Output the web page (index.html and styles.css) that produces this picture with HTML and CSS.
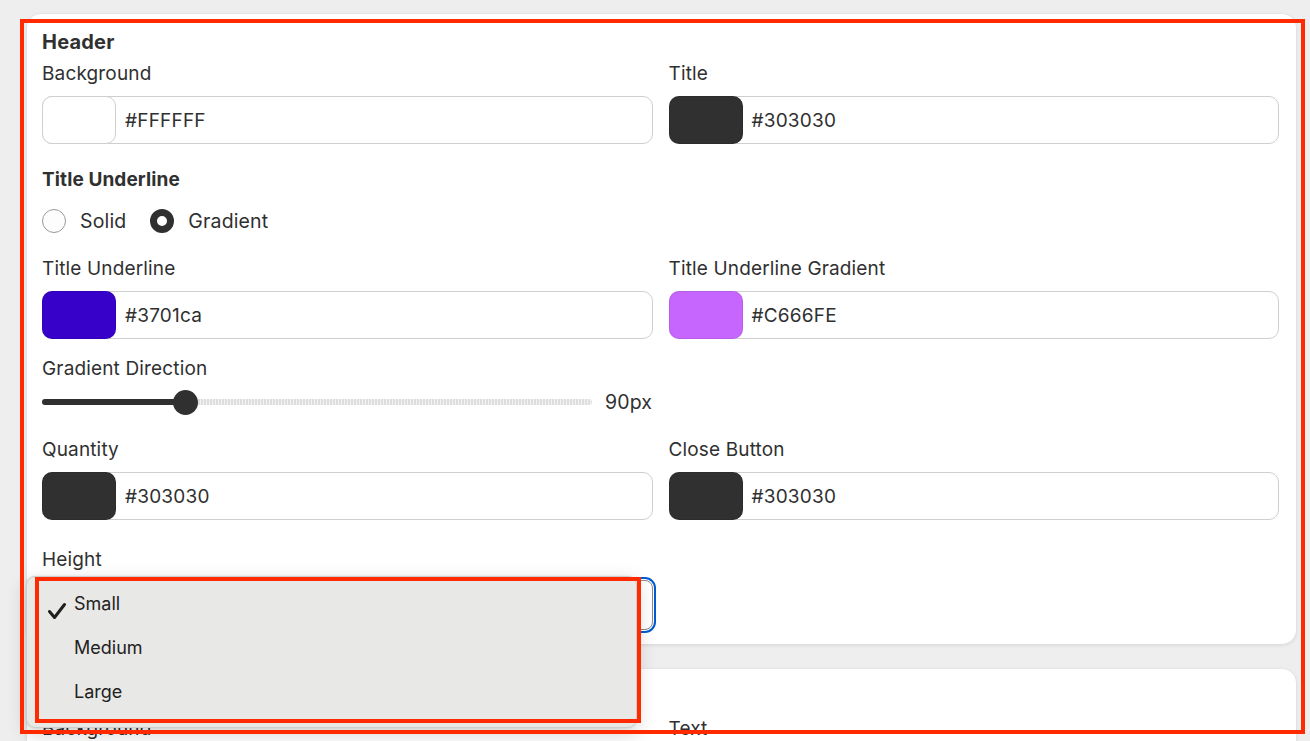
FILE: index.html
```html
<!DOCTYPE html>
<html lang="en">
<head>
<meta charset="utf-8">
<title>Header settings</title>
<link rel="stylesheet" href="styles.css">
</head>
<body>
<div class="page">
  <section class="card">
    <h2 class="card-title">Header</h2>
    <div class="grid">
      <div class="field">
        <label class="label">Background</label>
        <div class="color-input">
          <span class="swatch swatch-white"></span>
          <span class="hex">#FFFFFF</span>
        </div>
      </div>
      <div class="field">
        <label class="label">Title</label>
        <div class="color-input">
          <span class="swatch" style="background:#303030"></span>
          <span class="hex">#303030</span>
        </div>
      </div>
    </div>

    <h3 class="section-title">Title Underline</h3>
    <div class="radios">
      <label class="radio"><span class="radio-dot"></span><span>Solid</span></label>
      <label class="radio"><span class="radio-dot checked"></span><span>Gradient</span></label>
    </div>

    <div class="grid grid-spaced">
      <div class="field">
        <label class="label">Title Underline</label>
        <div class="color-input">
          <span class="swatch" style="background:#3701ca"></span>
          <span class="hex">#3701ca</span>
        </div>
      </div>
      <div class="field">
        <label class="label">Title Underline Gradient</label>
        <div class="color-input">
          <span class="swatch" style="background:#C666FE"></span>
          <span class="hex">#C666FE</span>
        </div>
      </div>
    </div>

    <div class="field field-slider">
      <label class="label">Gradient Direction</label>
      <div class="slider-row">
        <div class="slider">
          <div class="slider-fill" style="width:26.1%"></div>
          <div class="slider-thumb" style="left:26.1%"></div>
        </div>
        <span class="slider-value">90px</span>
      </div>
    </div>

    <div class="grid grid-spaced">
      <div class="field">
        <label class="label">Quantity</label>
        <div class="color-input">
          <span class="swatch" style="background:#303030"></span>
          <span class="hex">#303030</span>
        </div>
      </div>
      <div class="field">
        <label class="label">Close Button</label>
        <div class="color-input">
          <span class="swatch" style="background:#303030"></span>
          <span class="hex">#303030</span>
        </div>
      </div>
    </div>

    <div class="grid grid-height">
      <div class="field">
        <label class="label">Height</label>
        <div class="select-wrap">
          <div class="select">Small</div>
          <ul class="menu">
            <li class="menu-item selected">
              <svg class="check" width="20" height="18" viewBox="0 0 20 18"><path d="M2.5 9.5 L7.5 15.5 L17.5 2.5" fill="none" stroke="#1f1f1f" stroke-width="3" stroke-linecap="round" stroke-linejoin="round"/></svg>
              <span>Small</span>
            </li>
            <li class="menu-item"><span>Medium</span></li>
            <li class="menu-item"><span>Large</span></li>
          </ul>
        </div>
      </div>
      <div></div>
    </div>
  </section>

  <section class="card card-second">
    <h2 class="card-title">Footer</h2>
    <div class="grid">
      <div class="field">
        <label class="label">Background</label>
        <div class="color-input">
          <span class="swatch swatch-white"></span>
          <span class="hex">#FFFFFF</span>
        </div>
      </div>
      <div class="field">
        <label class="label">Text</label>
        <div class="color-input">
          <span class="swatch" style="background:#303030"></span>
          <span class="hex">#303030</span>
        </div>
      </div>
    </div>
  </section>
</div>
<div class="annot annot-outer"></div>
<div class="annot annot-menu"></div>
</body>
</html>
```

FILE: styles.css
```css
* { box-sizing: border-box; }

html, body {
  margin: 0;
  padding: 0;
  height: 741px;
  overflow: hidden;
}

body {
  background: #eeeeee;
  font-family: Inter, "Noto Sans", sans-serif;
  color: #303030;
  position: relative;
}

.page {
  padding: 14px 14px 0 27px;
  display: flex;
  flex-direction: column;
  gap: 25px;
}

.card {
  background: #ffffff;
  border-radius: 14px;
  padding: 16px 17px 14px 15px;
  box-shadow: 0 1px 4px rgba(0, 0, 0, 0.10), 0 0 1px rgba(0, 0, 0, 0.08);
}

.card-title {
  margin: 0;
  font-size: 20px;
  line-height: 24px;
  font-weight: 650;
  letter-spacing: 0.2px;
}

.section-title {
  margin: 24px 0 0;
  font-size: 19px;
  line-height: 24px;
  font-weight: 650;
  letter-spacing: 0.1px;
}

.grid {
  display: grid;
  grid-template-columns: 1fr 1fr;
  column-gap: 16px;
  margin-top: 8px;
}

.grid-spaced { margin-top: 24px; }
.grid-height { margin-top: 28px; }

.field {
  display: flex;
  flex-direction: column;
}

.label {
  font-size: 19px;
  line-height: 24px;
  letter-spacing: 0.15px;
}

.color-input {
  margin-top: 10px;
  height: 48px;
  border: 1px solid #cfcfcf;
  border-radius: 10px;
  display: flex;
  align-items: center;
}

.swatch {
  width: 74px;
  height: 48px;
  margin: -1px 0 -1px -1px;
  border-radius: 10px;
  border: 1px solid rgba(0, 0, 0, 0.08);
  flex: none;
}

.swatch-white {
  background: #ffffff;
  border-color: #cfcfcf;
}

.hex {
  margin-left: 9px;
  font-size: 19px;
  letter-spacing: 0.2px;
}

.radios {
  margin-top: 17px;
  display: flex;
  gap: 24px;
  height: 24px;
}

.radio {
  display: flex;
  align-items: center;
  gap: 14px;
  font-size: 19.5px;
  letter-spacing: 0.15px;
}

.radio-dot {
  width: 24px;
  height: 24px;
  border-radius: 50%;
  border: 1px solid #9a9a9a;
  background: #fdfdfd;
  flex: none;
}

.radio-dot.checked {
  border: 7px solid #303030;
  background: #ffffff;
}

.field-slider { margin-top: 18px; }

.slider-row {
  margin-top: 9px;
  height: 24px;
  display: flex;
  align-items: center;
  width: 610px;
}

.slider {
  position: relative;
  flex: 1;
  height: 6px;
  border-radius: 3px;
  background: repeating-linear-gradient(90deg, #dedede 0 2px, #f3f3f3 2px 3px);
}

.slider-fill {
  height: 6px;
  border-radius: 3px;
  background: #303030;
}

.slider-thumb {
  position: absolute;
  top: 50%;
  width: 25px;
  height: 25px;
  margin: -12.5px 0 0 -12.5px;
  border-radius: 50%;
  background: #303030;
}

.slider-value {
  margin-left: 13px;
  font-size: 19.5px;
  letter-spacing: 0.1px;
}

.select-wrap {
  position: relative;
  margin-top: 8px;
}

.select {
  height: 50px;
  border: 1px solid #8a8a8a;
  border-radius: 8px;
  outline: 2px solid #005bd3;
  outline-offset: 1px;
  padding-left: 12px;
  display: flex;
  align-items: center;
  font-size: 17.5px;
}

.menu {
  position: absolute;
  left: -16px;
  top: -4px;
  width: 611px;
  height: 152px;
  margin: 0;
  padding: 4px 0 0;
  list-style: none;
  background: #e8e8e6;
  border: 1px solid #cdcdcd;
  border-radius: 9px;
  box-shadow: 0 6px 20px rgba(0, 0, 0, 0.18), 0 0 3px rgba(0, 0, 0, 0.08);
  z-index: 5;
}

.menu-item {
  position: relative;
  height: 44px;
  padding-left: 47px;
  display: flex;
  align-items: center;
  font-family: Inter, "Noto Sans", sans-serif;
  font-size: 18px;
  color: #222222;
}

.check {
  position: absolute;
  left: 20px;
  top: 21px;
}

.annot {
  position: absolute;
  border: 4px solid #ff2a00;
  pointer-events: none;
  z-index: 10;
}

.annot-outer {
  left: 20px;
  top: 19px;
  width: 1285px;
  height: 715px;
}

.annot-menu {
  left: 35px;
  top: 577px;
  width: 606px;
  height: 146px;
}
```
